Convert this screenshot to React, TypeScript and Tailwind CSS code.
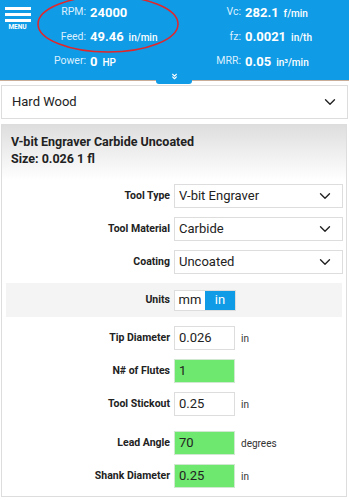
import { ChevronDown, ChevronsDown } from "lucide-react";

const blue = "bg-[#0f9be5]";

function Stat({ label, value, unit }: { label: string; value: string; unit?: string }) {
  return (
    <>
      <div className="text-right text-[10.5px] text-[#dcefff]">{label}</div>
      <div className="flex items-baseline gap-[5px] pl-[4px] text-white">
        <span className="text-[13px] font-bold">{value}</span>
        {unit && <span className="text-[10px] font-medium">{unit}</span>}
      </div>
    </>
  );
}

function SelectRow({ label, value }: { label: string; value: string }) {
  return (
    <div className="flex items-center">
      <div className="w-[172px] pr-[4px] text-right text-[10.5px] font-bold text-[#222]">{label}</div>
      <div className="mr-[3px] flex h-[24px] flex-1 items-center justify-between border border-[#ddd] bg-white pl-[4px] pr-[8px]">
        <span className="text-[13px] text-[#222]">{value}</span>
        <ChevronDown size={18} strokeWidth={1.8} className="text-[#222]" />
      </div>
    </div>
  );
}

function InputRow({ label, value, unit, green }: { label: string; value: string; unit?: string; green?: boolean }) {
  return (
    <div className="flex items-center">
      <div className="w-[172px] pr-[4px] text-right text-[10.5px] font-bold text-[#222]">{label}</div>
      <div
        className={`flex h-[24px] w-[61px] items-center border pl-[4px] text-[13px] text-[#222] ${
          green ? "border-[#cfe8cf] bg-[#6ee86e]" : "border-[#ddd] bg-white"
        }`}
      >
        {value}
      </div>
      {unit && <span className="pl-[6px] text-[10px] text-[#333]">{unit}</span>}
    </div>
  );
}

export default function App() {
  return (
    <div className="h-[500px] w-[349px] overflow-hidden bg-white font-['Roboto',sans-serif]">
      <header className={`relative h-[81px] border-b border-[#c9ad98] ${blue}`}>
        <div className="flex">
          <div className="flex w-[34px] flex-col items-center pt-[7px] pl-[1px]">
            <div className="flex w-[26px] flex-col gap-[3px]">
              <div className="h-[3px] bg-white" />
              <div className="h-[3px] bg-white" />
              <div className="h-[3px] bg-white" />
            </div>
            <div className="mt-[2px] text-[6.5px] font-bold leading-none text-white">MENU</div>
          </div>
          <div className="grid flex-1 grid-cols-[52px_114px_41px_1fr] auto-rows-[24.5px] items-center">
            <Stat label="RPM:" value="24000" />
            <Stat label="Vc:" value="282.1" unit="f/min" />
            <Stat label="Feed:" value="49.46" unit="in/min" />
            <Stat label="fz:" value="0.0021" unit="in/th" />
            <Stat label="Power:" value="0" unit="HP" />
            <Stat label="MRR:" value="0.05" unit="in³/min" />
          </div>
        </div>
        <div className={`absolute left-[156px] top-[72px] flex h-[12px] w-[36px] items-start justify-center rounded-b-[3px] ${blue}`}>
          <ChevronsDown size={9} strokeWidth={3} className="text-white" />
        </div>
        <svg className="pointer-events-none absolute left-[36px] top-[-6px]" width="144" height="62" viewBox="0 0 144 62">
          <ellipse cx="72" cy="30" rx="70" ry="28" fill="none" stroke="#e3262a" strokeWidth="1.5" />
        </svg>
      </header>

      <div className="mx-[1px] mt-[4px] flex h-[34px] w-[347px] items-center justify-between border border-[#ddd] pl-[10px] pr-[8px]">
        <span className="text-[13px] text-[#222]">Hard Wood</span>
        <ChevronDown size={18} strokeWidth={1.8} className="text-[#222]" />
      </div>

      <section className="mx-[1px] mt-[5px] h-[373px] w-[346px] border border-[#ddd]">
        <div className="h-[55px] bg-gradient-to-b from-[#dedede] to-white px-[9px] pt-[8px] text-[12.5px] font-bold leading-[17px] text-[#222]">
          <div>V-bit Engraver Carbide Uncoated</div>
          <div>Size: 0.026 1 fl</div>
        </div>
        <div className="mt-[4px] flex flex-col gap-[9px]">
          <SelectRow label="Tool Type" value="V-bit Engraver" />
          <SelectRow label="Tool Material" value="Carbide" />
          <SelectRow label="Coating" value="Uncoated" />
          <div className="mx-[4px] flex h-[34px] items-center bg-[#f4f4f4]">
            <div className="w-[168px] pr-[4px] text-right text-[10.5px] font-bold text-[#222]">Units</div>
            <div className="flex h-[21px] border border-[#ddd] text-[13px]">
              <span className="flex w-[30px] items-center justify-center bg-white text-[#222]">mm</span>
              <span className={`flex w-[30px] items-center justify-center text-white ${blue}`}>in</span>
            </div>
          </div>
          <InputRow label="Tip Diameter" value="0.026" unit="in" />
          <InputRow label="N# of Flutes" value="1" green />
          <InputRow label="Tool Stickout" value="0.25" unit="in" />
          <div className="mt-[6px]">
            <InputRow label="Lead Angle" value="70" unit="degrees" green />
          </div>
          <InputRow label="Shank Diameter" value="0.25" unit="in" green />
        </div>
      </section>
    </div>
  );
}
